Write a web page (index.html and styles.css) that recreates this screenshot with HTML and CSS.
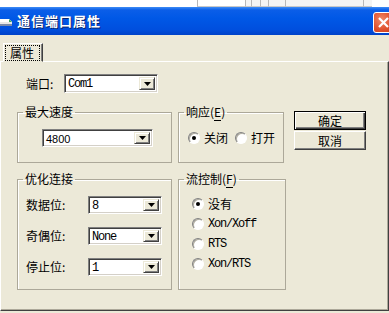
FILE: index.html
```html
<!DOCTYPE html>
<html lang="zh-CN">
<head>
<meta charset="utf-8">
<title>通信端口属性</title>
<link rel="stylesheet" href="styles.css">
</head>
<body>
<div class="desk">
    <span class="cell c1"></span>
    <span class="cell c2"><i class="ink"></i></span>
    <span class="cell c3"></span>
    <span class="cell c4"></span>
    <span class="cell c5"></span>
    <span class="cell c6"></span>
    <span class="cell c7"></span>
</div>

<div class="win">
    <div class="titlebar">
        <svg class="ticon" width="13" height="12" viewBox="0 0 13 12">
            <path d="M0 3 L9 3 L12 6 L12 10 L0 10 Z" fill="#e8e8e8"/>
            <path d="M0 3 L9 3 L12 6 L0 6 Z" fill="#ffffff"/>
            <path d="M0 8 L12 8 L12 10 L0 10 Z" fill="#7a8aa8"/>
            <path d="M9 3 L12 6 L9 6 Z" fill="#3aa860"/>
        </svg>
        <span class="ttl">通信端口属性</span>
        <span class="close">
            <svg width="13" height="13" viewBox="0 0 13 13">
                <path d="M2 2 L11 11 M11 2 L2 11" stroke="#fff" stroke-width="2.2"/>
            </svg>
        </span>
    </div>

    <div class="wbody">
        <div class="tabs">
            <span class="tab"><span class="focus">属性</span></span>
        </div>

        <div class="panel">
            <!-- 端口 -->
            <div class="port">
                <span class="lbl">端口:</span>
                <div class="combo w94">
                    <span class="val mono">Com1</span>
                    <span class="arrow"><svg width="7" height="4" viewBox="0 0 7 4"><path d="M0 0 H7 L3.5 4 Z"/></svg></span>
                </div>
            </div>

            <div class="mid">
                <fieldset class="grp speed">
                    <legend>最大速度</legend>
                    <div class="gbody">
                        <div class="combo w111">
                            <span class="val sans">4800</span>
                            <span class="arrow"><svg width="7" height="4" viewBox="0 0 7 4"><path d="M0 0 H7 L3.5 4 Z"/></svg></span>
                        </div>
                    </div>
                </fieldset>

                <fieldset class="grp resp">
                    <legend>响应(<u>E</u>)</legend>
                    <div class="gbody inline">
                        <label class="radio on"><i></i>关闭</label>
                        <label class="radio"><i></i>打开</label>
                    </div>
                </fieldset>

                <div class="btns">
                    <button class="btn def">确定</button>
                    <button class="btn">取消</button>
                </div>
            </div>

            <div class="low">
                <fieldset class="grp opt">
                    <legend>优化连接</legend>
                    <div class="gbody rows">
                        <div class="frow">
                            <span class="lbl2">数据位:</span>
                            <div class="combo w74">
                                <span class="val mono">8</span>
                                <span class="arrow"><svg width="7" height="4" viewBox="0 0 7 4"><path d="M0 0 H7 L3.5 4 Z"/></svg></span>
                            </div>
                        </div>
                        <div class="frow">
                            <span class="lbl2">奇偶位:</span>
                            <div class="combo w74">
                                <span class="val mono">None</span>
                                <span class="arrow"><svg width="7" height="4" viewBox="0 0 7 4"><path d="M0 0 H7 L3.5 4 Z"/></svg></span>
                            </div>
                        </div>
                        <div class="frow">
                            <span class="lbl2">停止位:</span>
                            <div class="combo w74">
                                <span class="val mono">1</span>
                                <span class="arrow"><svg width="7" height="4" viewBox="0 0 7 4"><path d="M0 0 H7 L3.5 4 Z"/></svg></span>
                            </div>
                        </div>
                    </div>
                </fieldset>

                <fieldset class="grp flow">
                    <legend>流控制(<u>F</u>)</legend>
                    <div class="gbody stack">
                        <label class="radio on"><i></i>没有</label>
                        <label class="radio"><i></i><span class="mono">Xon/Xoff</span></label>
                        <label class="radio"><i></i><span class="mono">RTS</span></label>
                        <label class="radio"><i></i><span class="mono">Xon/RTS</span></label>
                    </div>
                </fieldset>
            </div>
        </div>
    </div>
</div>
</body>
</html>
```

FILE: styles.css
```css
* {
    margin: 0;
    padding: 0;
    box-sizing: border-box;
}

body {
    width: 389px;
    height: 313px;
    overflow: hidden;
    background: #fff;
    font: 12px/14px "Noto Sans CJK SC", "Liberation Sans", sans-serif;
    color: #000;
}

/* 背后窗口的一条 */
.desk {
    height: 7px;
    display: flex;
    padding-left: 197px;
    background: #fff;
}
.desk .cell {
    height: 7px;
    border-left: 1px solid #b8b8b8;
    border-bottom: 1px solid #c8c8c8;
    background: #f4f4f4;
}
.desk .c1 { width: 48px; background: #fff; }
.desk .c2 { width: 6px; }
.desk .c3 { width: 9px; }
.desk .c4 { width: 8px; }
.desk .c5 { width: 17px; }
.desk .c6 { width: 78px; }
.desk .c7 { width: 9px; }
.desk .c1 { position: relative; }
.ink {
    display: block;
    margin: 3px 0 0 8px;
    width: 26px;
    height: 3px;
    background: repeating-linear-gradient(90deg, #444 0 3px, transparent 3px 6px);
}

/* 窗口 */
.win {
    background: #ece9d8;
    height: 306px;
}

.titlebar {
    height: 28px;
    display: flex;
    align-items: center;
    background: linear-gradient(#3d8cf5 0, #0b5ee8 3px, #0058e6 40%, #004fde 80%, #0042c8 100%);
    color: #fff;
}
.ticon {
    margin: 1px 0 0 0;
    flex: none;
}
.ttl {
    margin-left: 4px;
    font-weight: bold;
    font-size: 13px;
    letter-spacing: 1px;
    text-shadow: 1px 1px #0a246a;
    flex: 1;
}
.close {
    width: 21px;
    height: 21px;
    margin-right: -5px;
    margin-top: 2px;
    border: 1px solid #fff;
    border-radius: 3px;
    background: radial-gradient(circle at 40% 35%, #f08a6a, #e0502c 60%, #c8401c);
    display: flex;
    align-items: center;
    justify-content: center;
}

.wbody {
    padding-top: 8px;
}

/* 选项卡 */
.tabs {
    padding-left: 3px;
    height: 18px;
    position: relative;
    z-index: 1;
}
.tab {
    display: inline-block;
    width: 40px;
    height: 19px;
    border: 1px solid;
    border-color: #fff #404040 transparent #fff;
    box-shadow: inset -1px 0 #808080;
    background: #ece9d8;
    padding: 1px 2px 0 1px;
}
.focus {
    display: block;
    height: 16px;
    outline: 1px dotted #000;
    outline-offset: -1px;
    padding-left: 5px;
    line-height: 15px;
}

.panel {
    height: 250px;
    border: 1px solid;
    border-color: #fff #404040 #404040 #fff;
    box-shadow: inset -1px -1px #aca899;
    padding: 12px 0 0 16px;
}

/* 端口一行 */
.port {
    display: flex;
    align-items: center;
    padding-left: 9px;
    height: 19px;
}
.lbl {
    width: 38px;
}

/* 组合框 */
.combo {
    display: flex;
    height: 19px;
    border: 1px solid;
    border-color: #808080 #fff #fff #808080;
    box-shadow: inset 1px 1px #404040, inset -1px -1px #d4d0c8;
    background: #fff;
    padding: 2px;
}
.w94 { width: 94px; }
.w111 { width: 111px; height: 18px; }
.w74 { width: 74px; height: 18px; }
.combo .val {
    flex: 1;
    padding-left: 1px;
    line-height: 14px;
}
.combo .arrow {
    width: 16px;
    border: 1px solid;
    border-color: #ece9d8 #404040 #404040 #ece9d8;
    box-shadow: inset 1px 1px #fff, inset -1px -1px #808080;
    background: #ece9d8;
    display: flex;
    align-items: center;
    justify-content: center;
}
.w111 .arrow, .w74 .arrow { margin-top: 0; }

.mono {
    font-family: "Liberation Mono", monospace;
    font-size: 12px;
    letter-spacing: -1.2px;
}
.sans {
    font-family: "Liberation Sans", sans-serif;
    font-size: 11px;
}

/* 分组框 */
.grp {
    border: 1px solid #aca899;
    box-shadow: inset 1px 1px #fff;
    padding: 0;
    min-width: 0;
}
.grp legend {
    margin-left: 5px;
    padding: 0 2px;
    line-height: 14px;
}
.grp u {
    text-decoration: none;
    border-bottom: 1px solid #000;
    line-height: 11px;
}

.mid {
    display: flex;
    margin-top: 12px;
}
.speed {
    width: 155px;
    height: 58px;
    margin-right: 6px;
}
.speed .gbody {
    padding: 10px 0 0 24px;
}
.resp {
    width: 106px;
    height: 58px;
}
.inline {
    display: flex;
    gap: 7px;
    padding: 12px 0 0 9px;
}

.btns {
    margin: 6px 0 0 10px;
    display: flex;
    flex-direction: column;
    gap: 1px;
}
.btn {
    width: 72px;
    height: 19px;
    font: 12px/14px "Noto Sans CJK SC", sans-serif;
    background: #ece9d8;
    border: 1px solid;
    border-color: #fff #404040 #404040 #fff;
    box-shadow: inset -1px -1px #808080;
}
.btn.def {
    border: 1px solid #000;
    box-shadow: inset 1px 1px #fff, inset -1px -1px #404040, inset -2px -2px #808080;
}

/* 单选钮 */
.radio {
    display: flex;
    align-items: center;
    gap: 4px;
    height: 14px;
}
.radio i {
    width: 12px;
    height: 12px;
    border-radius: 50%;
    border: 1px solid;
    border-color: #808080 #fff #fff #808080;
    box-shadow: inset 1px 1px #b0ada0;
    background: #fff;
    display: flex;
    align-items: center;
    justify-content: center;
}
.radio.on i::after {
    content: "";
    width: 4px;
    height: 4px;
    border-radius: 50%;
    background: #000;
}

.low {
    display: flex;
    margin-top: 9px;
}
.opt {
    width: 155px;
    height: 118px;
    margin-right: 6px;
}
.rows {
    padding: 10px 0 0 8px;
    display: flex;
    flex-direction: column;
    gap: 13px;
}
.frow {
    display: flex;
    align-items: center;
}
.lbl2 {
    width: 62px;
}
.flow {
    width: 108px;
    height: 118px;
}
.stack {
    padding: 8px 0 0 13px;
}
.stack .radio {
    height: 20px;
}
```
